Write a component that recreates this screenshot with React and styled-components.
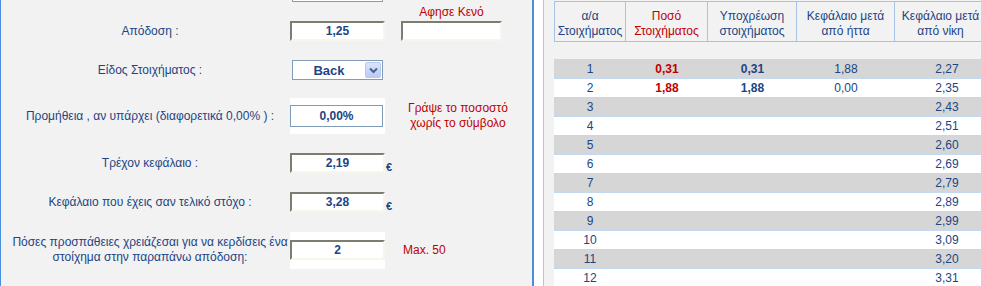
import styled, { createGlobalStyle, css } from "styled-components";

const GlobalStyle = createGlobalStyle`
    html, body {
        margin: 0;
        padding: 0;
        background: #fff;
    }
    body {
        font-family: "Liberation Sans", Arial, sans-serif;
        font-size: 12px;
        color: #1c4584;
    }
`;

const Page = styled.div`
    display: flex;
    height: 286px;
    overflow: hidden;
    background: #fff;
`;

const FormPanel = styled.div`
    width: 522px;
    flex-shrink: 0;
    background: #f2f2f2;
    border-left: 1px solid #4a8fdd;
    border-right: 2px solid #4a8fdd;
    padding-left: 9px;
    box-sizing: content-box;
`;

const Gap = styled.div`
    width: 9px;
    flex-shrink: 0;
    background: #fff;
`;

const TablePanel = styled.div`
    flex: 1;
    background: #f2f2f2;
    border-left: 1px solid #a8c8ec;
    padding-left: 10px;
    overflow: hidden;
`;

/* ---------- form ---------- */

const CutRow = styled.div`
    display: grid;
    grid-template-columns: 280px 95px 1fr;
    height: 2px;
`;

const CutBox = styled.div`
    grid-column: 2;
    margin-left: 2px;
    width: 89px;
    height: 1px;
    border: 1px solid #7f9db9;
    border-top: none;
    background: #fff;
`;

const Row = styled.div`
    display: grid;
    grid-template-columns: 280px 95px 1fr;
    height: ${(p) => p.$h}px;
    align-items: ${(p) => (p.$end ? "end" : "center")};
    padding-bottom: ${(p) => p.$pb || 0}px;
    box-sizing: border-box;
`;

const Label = styled.div`
    text-align: center;
    line-height: ${(p) => p.$lh || 20}px;
    color: #1c4584;
`;

const insetBorder = css`
    border-top: 2px solid #7c7c70;
    border-left: 2px solid #7c7c70;
    border-right: 2px solid #f6f6ee;
    border-bottom: 2px solid #f6f6ee;
`;

const Input = styled.div`
    box-sizing: border-box;
    width: ${(p) => p.$w || 95}px;
    height: 20px;
    margin-top: ${(p) => p.$mt || 0}px;
    ${insetBorder};
    background: #fff;
    font-weight: bold;
    text-align: center;
    line-height: 16px;
    color: #1c4584;
`;

const WhiteWrap = styled.div`
    width: 95px;
    height: ${(p) => p.$h}px;
    background: #fff;
    display: flex;
    align-items: center;
`;

const PlainInput = styled.div`
    box-sizing: border-box;
    width: 93px;
    height: 22px;
    border: 1px solid #7f9db9;
    background: #fff;
    font-weight: bold;
    text-align: center;
    line-height: 20px;
    color: #1c4584;
`;

const Select = styled.div`
    box-sizing: border-box;
    margin-left: 2px;
    width: 91px;
    height: 20px;
    border: 1px solid #7f9db9;
    background: #fff;
    display: flex;
    align-items: center;
`;

const SelectValue = styled.div`
    flex: 1;
    text-align: center;
    font-weight: bold;
    font-size: 13px;
    color: #1c4584;
`;

const SelectButton = styled.div`
    width: 16px;
    height: 16px;
    margin-right: 1px;
    box-sizing: border-box;
    border: 1px solid #b9c9ef;
    border-radius: 2px;
    background: linear-gradient(#dbe5fc, #b7cbf8);
    display: flex;
    align-items: center;
    justify-content: center;
`;

const Side = styled.div`
    display: flex;
    flex-direction: column;
    align-items: ${(p) => (p.$left ? "flex-start" : "center")};
    padding-left: ${(p) => p.$pl || 0}px;
    width: ${(p) => p.$w || "auto"};
`;

const RedNote = styled.div`
    color: #c00000;
    text-align: center;
    line-height: ${(p) => p.$lh || 14}px;
    font-size: 12px;
    white-space: nowrap;
`;

const Euro = styled.div`
    font-weight: bold;
    font-size: 11px;
    padding-left: 1px;
    padding-top: 7px;
    color: #1c4584;
`;

/* ---------- table ---------- */

const cols = [72, 82, 89, 98, 104];

const HeadRow = styled.div`
    display: flex;
    margin-top: 1px;
    width: max-content;
`;

const HeadCell = styled.div`
    box-sizing: border-box;
    width: ${(p) => p.$w}px;
    height: 41px;
    border: 1px solid #a6c3e6;
    border-left: ${(p) => (p.$first ? "1px solid #a6c3e6" : "none")};
    padding-top: 7px;
    padding-right: ${(p) => (p.$last ? 12 : 0)}px;
    text-align: center;
    line-height: 15px;
    white-space: nowrap;
    color: ${(p) => (p.$red ? "#c00000" : "#1c4584")};
`;

const Body = styled.div`
    margin-top: 17px;
    border-top: 1px solid #c3d9f1;
    width: max-content;
`;

const BodyRow = styled.div`
    display: flex;
    height: 19px;
    box-sizing: border-box;
    border-bottom: 1px solid #c3d9f1;
    background: ${(p) => (p.$odd ? "#d6d6d6" : "#fff")};
`;

const Cell = styled.div`
    width: ${(p) => p.$w}px;
    text-align: center;
    line-height: 18px;
    font-size: 12px;
    font-weight: ${(p) => (p.$bold ? "bold" : "normal")};
    color: ${(p) => (p.$red ? "#c00000" : "#1c4584")};
`;

const headers = [
    ["α/α", "Στοιχήματος"],
    ["Ποσό", "Στοιχήματος"],
    ["Υποχρέωση", "στοιχήματος"],
    ["Κεφάλαιο μετά", "από ήττα"],
    ["Κεφάλαιο μετά", "από νίκη"],
];

const rows = [
    ["1", "0,31", "0,31", "1,88", "2,27"],
    ["2", "1,88", "1,88", "0,00", "2,35"],
    ["3", "", "", "", "2,43"],
    ["4", "", "", "", "2,51"],
    ["5", "", "", "", "2,60"],
    ["6", "", "", "", "2,69"],
    ["7", "", "", "", "2,79"],
    ["8", "", "", "", "2,89"],
    ["9", "", "", "", "2,99"],
    ["10", "", "", "", "3,09"],
    ["11", "", "", "", "3,20"],
    ["12", "", "", "", "3,31"],
];

function Chevron() {
    return (
        <svg width="9" height="7" viewBox="0 0 9 7">
            <path d="M1 1.5 L4.5 5 L8 1.5" fill="none" stroke="#4d6185" strokeWidth="2" />
        </svg>
    );
}

export default function App() {
    return (
        <>
            <GlobalStyle />
            <Page>
                <FormPanel>
                    <CutRow>
                        <CutBox />
                    </CutRow>
                    <Row $h={48} $end $pb={9}>
                        <Label>Απόδοση :</Label>
                        <Input>1,25</Input>
                        <Side $pl={16} $w="101px">
                            <RedNote $lh={14}>Αφησε Κενό</RedNote>
                            <Input $w={101} $mt={2} />
                        </Side>
                    </Row>
                    <Row $h={40}>
                        <Label>Είδος Στοιχήματος :</Label>
                        <Select>
                            <SelectValue>Back</SelectValue>
                            <SelectButton>
                                <Chevron />
                            </SelectButton>
                        </Select>
                    </Row>
                    <Row $h={52}>
                        <Label>Προμήθεια , αν υπάρχει (διαφορετικά 0,00% ) :</Label>
                        <WhiteWrap $h={36}>
                            <PlainInput>0,00%</PlainInput>
                        </WhiteWrap>
                        <Side $pl={23} $w="100px">
                            <RedNote $lh={15}>
                                Γράψε το ποσοστό
                                <br />
                                χωρίς το σύμβολο
                            </RedNote>
                        </Side>
                    </Row>
                    <Row $h={42}>
                        <Label>Τρέχον κεφάλαιο :</Label>
                        <Input>2,19</Input>
                        <Euro>€</Euro>
                    </Row>
                    <Row $h={36}>
                        <Label>Κεφάλαιο που έχεις σαν τελικό στόχο :</Label>
                        <Input>3,28</Input>
                        <Euro>€</Euro>
                    </Row>
                    <Row $h={60}>
                        <Label $lh={15}>
                            Πόσες προσπάθειες χρειάζεσαι για να κερδίσεις ένα
                            <br />
                            στοίχημα στην παραπάνω απόδοση:
                        </Label>
                        <WhiteWrap $h={37}>
                            <Input>2</Input>
                        </WhiteWrap>
                        <Side $pl={18} $left>
                            <RedNote>Max. 50</RedNote>
                        </Side>
                    </Row>
                </FormPanel>
                <Gap />
                <TablePanel>
                    <HeadRow>
                        {headers.map((h, i) => (
                            <HeadCell
                                key={i}
                                $w={cols[i]}
                                $first={i === 0}
                                $last={i === headers.length - 1}
                                $red={i === 1}
                            >
                                {h[0]}
                                <br />
                                {h[1]}
                            </HeadCell>
                        ))}
                    </HeadRow>
                    <Body>
                        {rows.map((r, i) => (
                            <BodyRow key={i} $odd={i % 2 === 0}>
                                {r.map((v, j) => (
                                    <Cell key={j} $w={cols[j]} $bold={j === 1 || j === 2} $red={j === 1}>
                                        {v}
                                    </Cell>
                                ))}
                            </BodyRow>
                        ))}
                    </Body>
                </TablePanel>
            </Page>
        </>
    );
}
